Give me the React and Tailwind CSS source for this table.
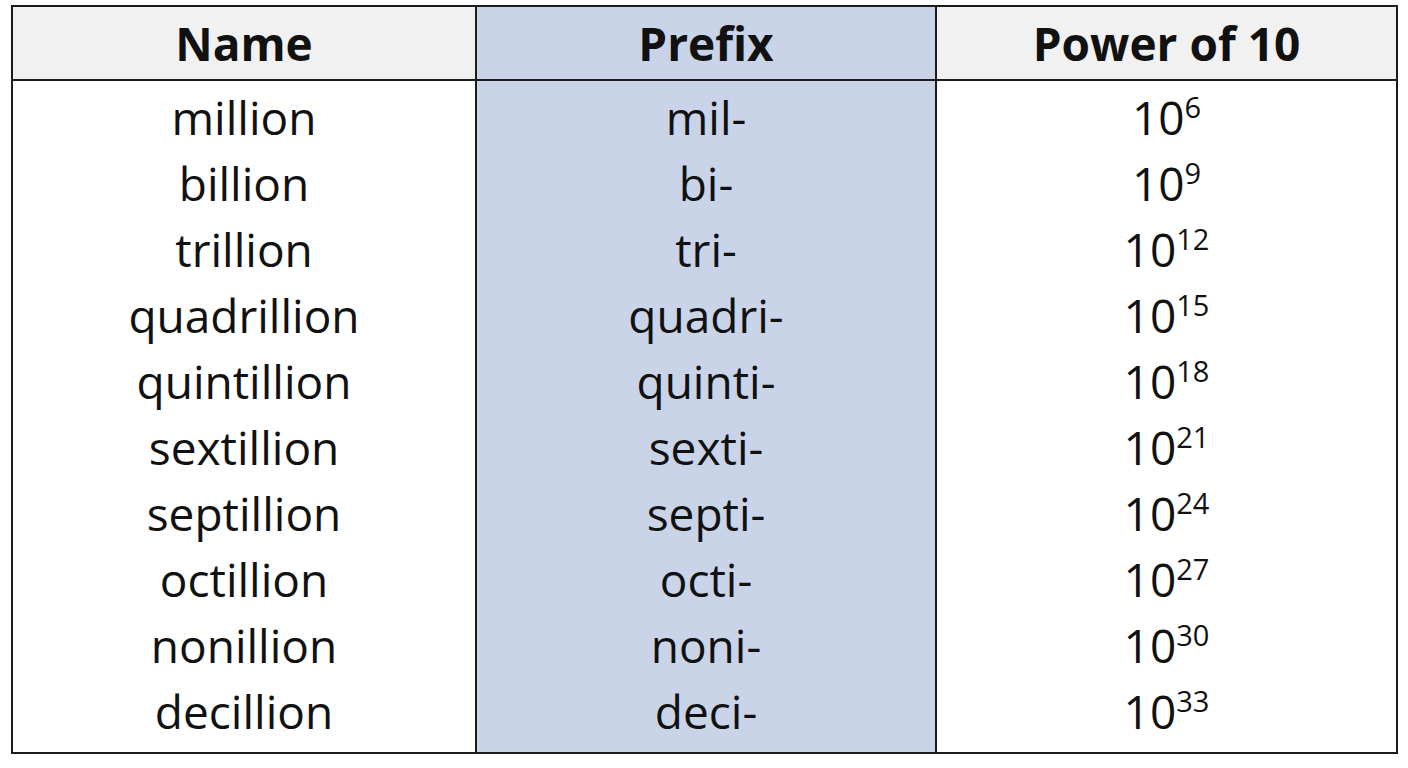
import React from 'react';

const rows = [
  ['million', 'mil-', '6'],
  ['billion', 'bi-', '9'],
  ['trillion', 'tri-', '12'],
  ['quadrillion', 'quadri-', '15'],
  ['quintillion', 'quinti-', '18'],
  ['sextillion', 'sexti-', '21'],
  ['septillion', 'septi-', '24'],
  ['octillion', 'octi-', '27'],
  ['nonillion', 'noni-', '30'],
  ['decillion', 'deci-', '33'],
];

export default function App() {
  return (
    <div className="w-[1408px] h-[768px] bg-white pt-[5px] pl-[11px] font-['Open_Sans',sans-serif] text-[#111]">
      <div className="w-[1387px] h-[749px] border-2 border-[#1c1c1c] grid grid-cols-[462px_462px_1fr] grid-rows-[74px_1fr]">
        <div className="bg-[#f1f1f1] border-b-2 border-[#1c1c1c] flex items-center justify-center text-[46px] font-bold">Name</div>
        <div className="bg-[#c9d4e8] border-b-2 border-x-2 border-[#1c1c1c] flex items-center justify-center text-[46px] font-bold">Prefix</div>
        <div className="bg-[#f1f1f1] border-b-2 border-[#1c1c1c] flex items-center justify-center text-[46px] font-bold">Power of 10</div>

        <div className="flex flex-col pt-[3px]">
          {rows.map(([name]) => (
            <div key={name} className="h-[66px] flex items-center justify-center text-[46px]">{name}</div>
          ))}
        </div>
        <div className="bg-[#c9d4e8] border-x-2 border-[#1c1c1c] flex flex-col pt-[3px]">
          {rows.map(([name, prefix]) => (
            <div key={name} className="h-[66px] flex items-center justify-center text-[46px]">{prefix}</div>
          ))}
        </div>
        <div className="flex flex-col pt-[3px]">
          {rows.map(([name, , exp]) => (
            <div key={name} className="h-[66px] flex items-center justify-center text-[46px]">
              <span>10<sup className="text-[29px] relative -top-[17px]">{exp}</sup></span>
            </div>
          ))}
        </div>
      </div>
    </div>
  );
}
